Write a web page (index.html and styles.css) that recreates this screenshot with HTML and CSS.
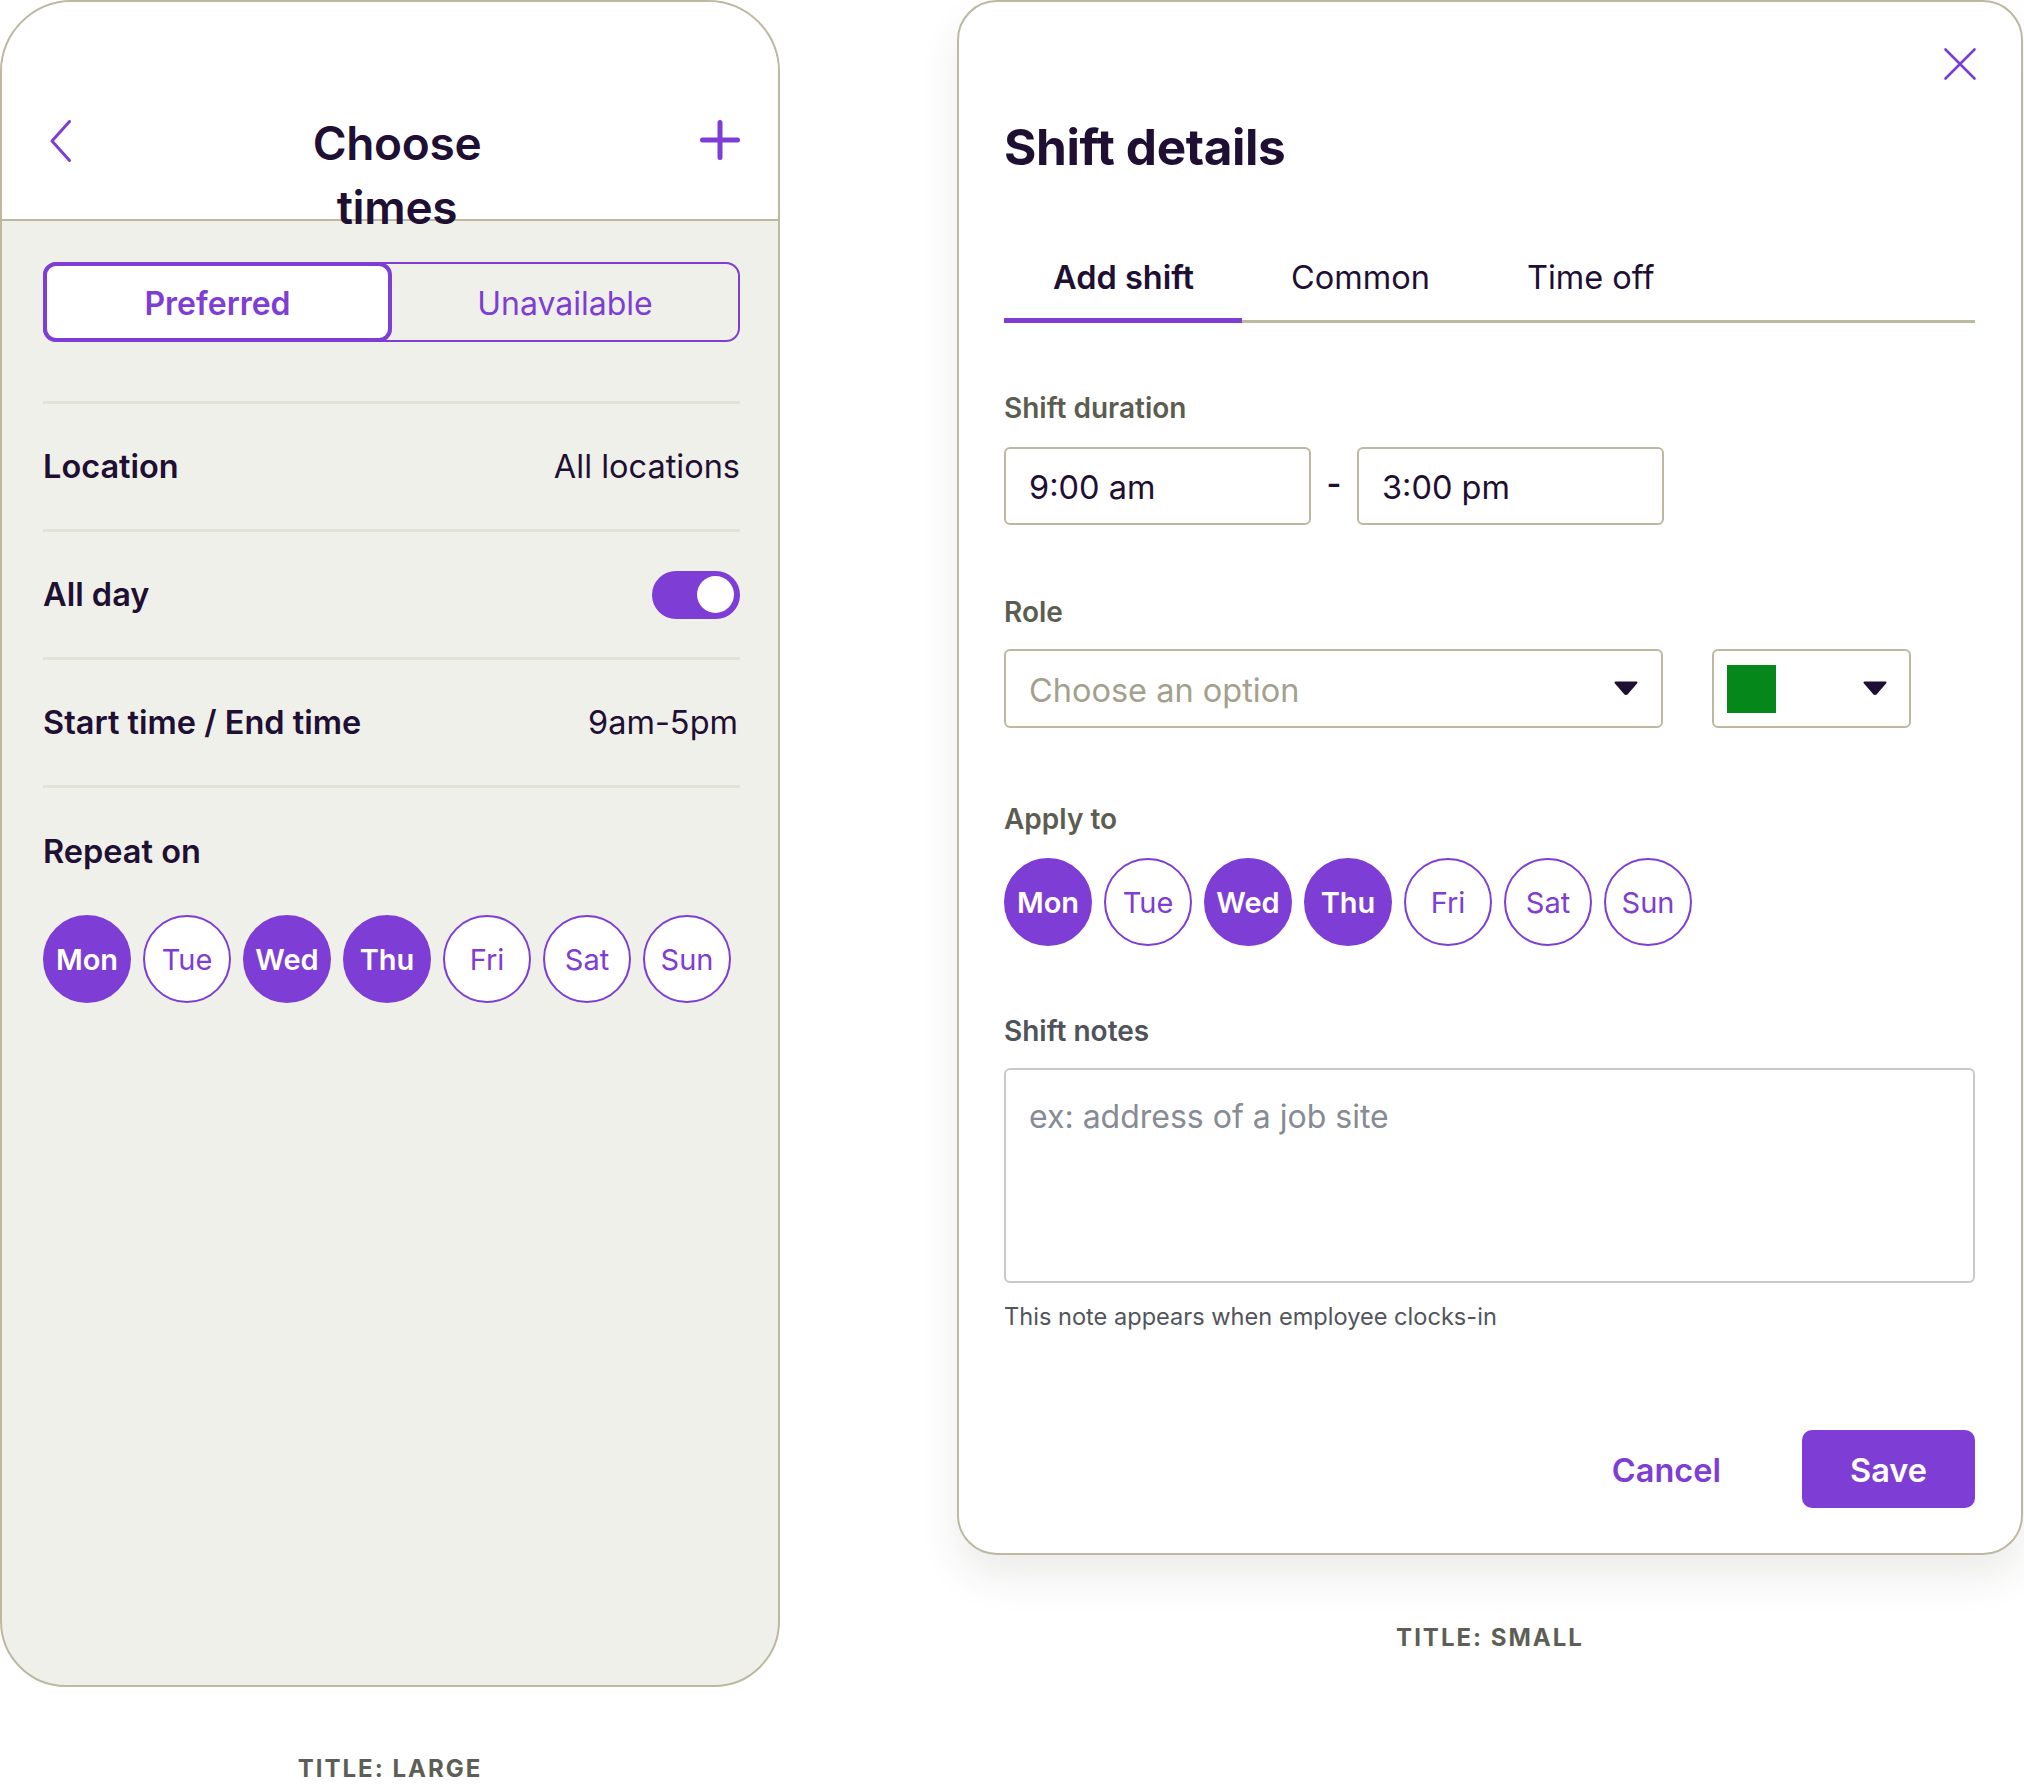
FILE: index.html
```html
<!DOCTYPE html>
<html lang="en">
<head>
<meta charset="utf-8">
<title>Shift screens</title>
<link rel="stylesheet" href="styles.css">
</head>
<body>
<div class="page">
  <section class="col col-large">
    <div class="phone">
      <header class="phone-head">
        <span class="icon back">
          <svg width="22" height="42" viewBox="0 0 22 42"><polyline points="19.5,1.5 2,21 19.5,40.5" fill="none" stroke="#7e3dd4" stroke-width="3" stroke-linecap="round" stroke-linejoin="round"/></svg>
        </span>
        <h1 class="phone-title">Choose<br>times</h1>
        <span class="icon add">
          <svg width="40" height="40" viewBox="0 0 40 40"><path d="M20 2.5V37.5M2.5 20H37.5" fill="none" stroke="#7e3dd4" stroke-width="5" stroke-linecap="round"/></svg>
        </span>
      </header>
      <div class="phone-body">
        <div class="segment">
          <div class="seg seg-active">Preferred</div>
          <div class="seg">Unavailable</div>
        </div>
        <div class="rows">
          <div class="row"><span class="row-label">Location</span><span class="row-value">All locations</span></div>
          <div class="row"><span class="row-label">All day</span><span class="toggle"><span class="knob"></span></span></div>
          <div class="row"><span class="row-label">Start time / End time</span><span class="row-value value-time">9am-5pm</span></div>
        </div>
        <div class="repeat-label">Repeat on</div>
        <div class="days">
          <span class="day on">Mon</span>
          <span class="day">Tue</span>
          <span class="day on">Wed</span>
          <span class="day on">Thu</span>
          <span class="day">Fri</span>
          <span class="day">Sat</span>
          <span class="day">Sun</span>
        </div>
      </div>
    </div>
    <div class="caption caption-large">TITLE: LARGE</div>
  </section>

  <section class="col col-small">
    <div class="dialog">
      <span class="close">
        <svg width="32" height="32" viewBox="0 0 32 32"><path d="M1.5 1.5L30.5 30.5M30.5 1.5L1.5 30.5" fill="none" stroke="#7e3dd4" stroke-width="2.6" stroke-linecap="round"/></svg>
      </span>
      <h2 class="dialog-title">Shift details</h2>
      <nav class="tabs">
        <span class="tab tab-active">Add shift</span>
        <span class="tab">Common</span>
        <span class="tab">Time off</span>
      </nav>

      <div class="field">
        <div class="label">Shift duration</div>
        <div class="duration">
          <div class="input">9:00 am</div>
          <span class="dash">-</span>
          <div class="input">3:00 pm</div>
        </div>
      </div>

      <div class="field field-role">
        <div class="label">Role</div>
        <div class="role-row">
          <div class="select select-role">
            <span class="placeholder">Choose an option</span>
            <svg class="caret" width="24" height="14" viewBox="0 0 24 14"><path d="M1.5 1.5H22.5L13.4 12.2Q12 13.6 10.6 12.2Z" fill="#1e0f33" stroke="#1e0f33" stroke-width="2" stroke-linejoin="round"/></svg>
          </div>
          <div class="select select-color">
            <span class="swatch"></span>
            <svg class="caret" width="24" height="14" viewBox="0 0 24 14"><path d="M1.5 1.5H22.5L13.4 12.2Q12 13.6 10.6 12.2Z" fill="#1e0f33" stroke="#1e0f33" stroke-width="2" stroke-linejoin="round"/></svg>
          </div>
        </div>
      </div>

      <div class="field field-apply">
        <div class="label">Apply to</div>
        <div class="days">
          <span class="day on">Mon</span>
          <span class="day">Tue</span>
          <span class="day on">Wed</span>
          <span class="day on">Thu</span>
          <span class="day">Fri</span>
          <span class="day">Sat</span>
          <span class="day">Sun</span>
        </div>
      </div>

      <div class="field field-notes">
        <div class="label label-notes">Shift notes</div>
        <div class="textarea">ex: address of a job site</div>
        <div class="helper">This note appears when employee clocks-in</div>
      </div>

      <div class="actions">
        <span class="btn-cancel">Cancel</span>
        <span class="btn-save">Save</span>
      </div>
    </div>
    <div class="caption caption-small">TITLE: SMALL</div>
  </section>
</div>
</body>
</html>
```

FILE: styles.css
```css
* { box-sizing: border-box; }

html, body {
  margin: 0;
  padding: 0;
  background: #ffffff;
}

body {
  font-family: Inter, "Noto Sans", "Liberation Sans", sans-serif;
  color: #1e0f33;
  width: 2024px;
  height: 1788px;
  overflow: hidden;
}

.page {
  display: flex;
  align-items: flex-start;
  gap: 177px;
}

.col {
  display: flex;
  flex-direction: column;
  align-items: center;
}

/* ---------- Phone (large) ---------- */
.phone {
  width: 780px;
  height: 1687px;
  border: 2px solid #bcb9a0;
  border-radius: 72px 72px 66px 66px;
  background: #f0f0eb;
  overflow: hidden;
}

.phone-head {
  height: 219px;
  background: #ffffff;
  border-bottom: 2px solid #bcb9a0;
  display: flex;
  align-items: flex-start;
  padding: 109px 38px 0 41px;
  position: relative;
  z-index: 1;
}

.icon { display: flex; }
.icon.back { margin: 9px 0 0 7px; width: 22px; }
.icon.add { margin-top: 9px; width: 40px; }

.phone-title {
  flex: 1;
  margin: 0;
  padding-left: 22px;
  text-align: center;
  font-size: 46px;
  line-height: 64px;
  font-weight: 600;
  letter-spacing: -0.3px;
  color: #1e0f33;
}

.phone-body {
  padding: 41px 38px 0 41px;
}

.segment {
  display: flex;
  height: 80px;
  border: 2px solid #7e3dd4;
  border-radius: 14px;
}

.seg {
  flex: 1;
  display: flex;
  align-items: center;
  justify-content: center;
  font-size: 32px;
  color: #7e3dd4;
  font-weight: 400;
  padding-top: 3px;
}

.seg-active {
  flex: 0 0 349px;
  margin: -2px 0 -2px -2px;
  background: #ffffff;
  border: 4px solid #7e3dd4;
  border-radius: 13px;
  font-weight: 600;
}

.rows {
  margin-top: 59px;
  border-bottom: 3px solid #e3e2d8;
}

.row {
  height: 128px;
  border-top: 3px solid #e3e2d8;
  display: flex;
  align-items: center;
  justify-content: space-between;
  font-size: 32.5px;
}

.row-label { font-weight: 600; }
.row-value { font-weight: 400; }
.value-time { margin-right: 2px; }

.toggle {
  width: 88px;
  height: 48px;
  border-radius: 24px;
  background: #7e3dd4;
  display: flex;
  align-items: center;
  justify-content: flex-end;
  padding-right: 6px;
}

.knob {
  width: 37px;
  height: 37px;
  border-radius: 50%;
  background: #ffffff;
}

.repeat-label {
  margin-top: 42px;
  font-size: 32.5px;
  line-height: 44px;
  font-weight: 600;
}

.days {
  display: flex;
  gap: 12px;
}

.phone-body .days { margin-top: 41px; }

.day {
  width: 88px;
  height: 88px;
  border-radius: 50%;
  border: 2px solid #7e3dd4;
  background: #ffffff;
  color: #7e3dd4;
  display: flex;
  align-items: center;
  justify-content: center;
  font-size: 29px;
  font-weight: 400;
}

.day.on {
  background: #7e3dd4;
  color: #ffffff;
  font-weight: 600;
}

.caption {
  font-size: 24px;
  font-weight: 700;
  letter-spacing: 2px;
  color: #5d5e55;
  line-height: 30px;
}

.caption-large { margin-top: 67px; }
.caption-small { margin-top: 68px; }

/* ---------- Dialog (small) ---------- */
.dialog {
  position: relative;
  width: 1066px;
  height: 1555px;
  border: 2px solid #bcb9a0;
  border-radius: 40px;
  background: #ffffff;
  padding: 115px 46px 0 45px;
  box-shadow: 0 22px 40px rgba(40, 40, 30, 0.09);
}

.close {
  position: absolute;
  top: 46px;
  right: 45px;
  display: flex;
}

.dialog-title {
  margin: 0;
  font-size: 49.5px;
  line-height: 60px;
  font-weight: 700;
  letter-spacing: -0.4px;
  color: #1e0f33;
}

.tabs {
  margin-top: 82px;
  display: flex;
  height: 64px;
  box-shadow: inset 0 -3px 0 #bcb9a0;
}

.tab {
  padding: 0 48px 0 49px;
  font-size: 32.5px;
  line-height: 38px;
  color: #1e0f33;
}

.tab-active {
  font-weight: 600;
  box-shadow: inset 0 -5px 0 #7e3dd4;
}

.field { margin-top: 67px; }
.field-role { margin-top: 69px; }
.field-apply { margin-top: 73px; }
.field-notes { margin-top: 67px; }

.label {
  font-size: 28px;
  line-height: 36px;
  font-weight: 600;
  color: #5c5d50;
  margin-bottom: 21px;
}

.label-notes { color: #50535a; margin-bottom: 19px; }

.duration {
  display: flex;
  align-items: center;
}

.input {
  width: 307px;
  height: 78px;
  border: 2px solid #bcb9a0;
  border-radius: 6px;
  display: flex;
  align-items: center;
  padding: 3px 0 0 23px;
  font-size: 32.5px;
  color: #1e0f33;
}

.dash {
  width: 46px;
  text-align: center;
  font-size: 32px;
  font-weight: 600;
  margin-top: -6px;
}

.role-row {
  display: flex;
  gap: 49px;
  margin-top: -2px;
}

.select {
  height: 79px;
  border: 2px solid #bcb9a0;
  border-radius: 6px;
  display: flex;
  align-items: center;
  justify-content: space-between;
}

.select-role {
  width: 659px;
  padding: 0 23px 0 23px;
}

.select-color {
  width: 199px;
  padding: 0 22px 0 13px;
}

.placeholder {
  font-size: 32.5px;
  color: #a3a18d;
  padding-top: 3px;
}

.swatch {
  width: 49px;
  height: 48px;
  background: #06871a;
}

.caret {
  display: block;
  margin-top: -2px;
}

.field-apply .label { margin-bottom: 21px; }

.textarea {
  width: 971px;
  height: 215px;
  border: 2px solid #c9c9c9;
  border-radius: 6px;
  padding: 25px 23px;
  font-size: 32px;
  line-height: 44px;
  color: #868b94;
}

.helper {
  margin-top: 18px;
  font-size: 23.6px;
  line-height: 32px;
  color: #52555c;
}

.actions {
  margin-top: 97px;
  display: flex;
  justify-content: flex-end;
  align-items: center;
}

.btn-cancel {
  font-size: 32.5px;
  font-weight: 600;
  color: #7e3dd4;
  margin-right: 81px;
  padding-top: 3px;
}

.btn-save {
  width: 173px;
  height: 78px;
  border-radius: 10px;
  background: #7e3dd4;
  color: #ffffff;
  font-size: 32.5px;
  font-weight: 600;
  display: flex;
  align-items: center;
  justify-content: center;
  padding-top: 3px;
}
```
